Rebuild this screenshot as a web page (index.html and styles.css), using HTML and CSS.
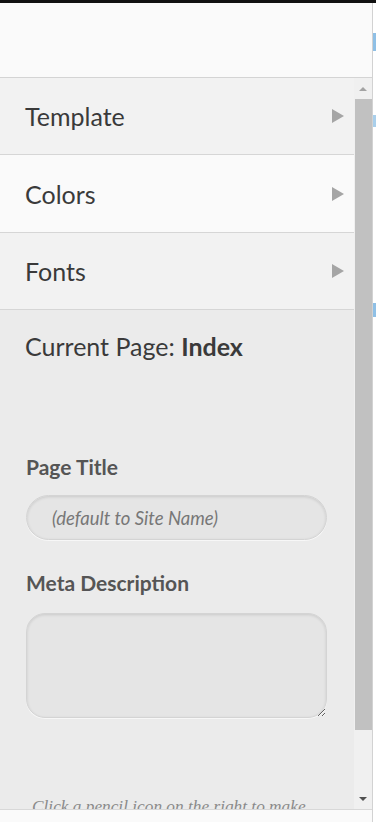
FILE: index.html
```html
<!DOCTYPE html>
<html lang="en">
<head>
    <meta charset="UTF-8">
    <meta name="viewport" content="width=device-width, initial-scale=1.0">
    <title>Site Editor</title>
    <link rel="stylesheet" href="styles.css">
</head>
<body>
    <div class="topline"></div>
    <div class="frame">
        <div class="panel">
            <div class="panel-header"></div>

            <div class="scroller">
                <div class="scroll-content">
                    <div class="menu-item alt">
                        <span>Template</span>
                        <i class="arrow"></i>
                    </div>
                    <div class="menu-item">
                        <span>Colors</span>
                        <i class="arrow"></i>
                    </div>
                    <div class="menu-item alt">
                        <span>Fonts</span>
                        <i class="arrow"></i>
                    </div>

                    <div class="page-settings">
                        <h2 class="current-page">Current Page: <b>Index</b></h2>

                        <label class="field-label" for="pageTitle">Page Title</label>
                        <input id="pageTitle" class="field-input" type="text" placeholder="(default to Site Name)">

                        <label class="field-label" for="metaDesc">Meta Description</label>
                        <textarea id="metaDesc" class="field-textarea"></textarea>

                        <p class="hint">Click a pencil icon on the right to make changes to the page.</p>
                    </div>
                </div>

                <div class="scrollbar">
                    <div class="sb-button"><i class="sb-up"></i></div>
                    <div class="sb-thumb"></div>
                    <div class="sb-track"></div>
                    <div class="sb-button"><i class="sb-down"></i></div>
                </div>
            </div>

            <div class="panel-footer"></div>
        </div>
        <div class="outside"></div>
    </div>
</body>
</html>
```

FILE: styles.css
```css
* {
    box-sizing: border-box;
}
body {
    margin: 0;
    height: 822px;
    overflow: hidden;
    background: #fff;
    font-family: 'Lato', 'Open Sans', sans-serif;
    color: #3a3a3a;
}
.topline {
    height: 3px;
    background: #111;
}
.frame {
    display: flex;
    height: 819px;
}
.panel {
    width: 373px;
    display: flex;
    flex-direction: column;
    border-right: 1px solid #d2d2d2;
}
.panel-header {
    height: 75px;
    flex-shrink: 0;
    background: #fafafa;
    border-bottom: 1px solid #d4d4d4;
}
.scroller {
    display: flex;
    height: 731px;
    flex-shrink: 0;
}
.scroll-content {
    flex: 1;
    overflow: hidden;
    background: #ebebeb;
}
.menu-item {
    height: 77.4px;
    display: flex;
    align-items: center;
    justify-content: space-between;
    padding: 0 10px 0 25px;
    background: #fafafa;
    border-bottom: 1px solid #d6d6d6;
    font-size: 25px;
}
.menu-item.alt {
    background: #f2f2f2;
}
.arrow {
    width: 0;
    height: 0;
    border-top: 7px solid transparent;
    border-bottom: 7px solid transparent;
    border-left: 12px solid #a5a5a5;
}
.page-settings {
    padding: 0 27px 0 26px;
}
.current-page {
    margin: 21px 0 0 -1px;
    font-size: 25px;
    font-weight: normal;
    line-height: 30px;
}
.current-page b {
    font-weight: bold;
}
.field-label {
    display: block;
    margin-top: 93px;
    font-size: 21px;
    font-weight: bold;
    color: #555;
    line-height: 26px;
}
.field-label + .field-input {
    margin-top: 15px;
}
.field-input,
.field-textarea {
    display: block;
    width: 301px;
    background: #e5e5e5;
    border: 1px solid #d4d4d4;
    box-shadow: inset 0 1px 3px rgba(0, 0, 0, 0.12), 0 1px 0 #f7f7f7;
    outline: none;
    font-family: 'Lato', sans-serif;
}
.field-input {
    height: 45px;
    border-radius: 23px;
    padding: 0 25px;
    font-size: 18.5px;
    font-style: italic;
    color: #666;
}
.field-input::placeholder {
    color: #777;
}
.field-input + .field-label {
    margin-top: 30px;
}
.field-textarea {
    margin-top: 17px;
    height: 105px;
    border-radius: 19px;
    resize: vertical;
}
.hint {
    margin: 79px 0 0 6px;
    font-family: 'Liberation Serif', serif;
    font-style: italic;
    font-size: 17.3px;
    color: #8a8a8a;
}
.scrollbar {
    width: 18px;
    display: flex;
    flex-direction: column;
    background: #f0f0f0;
}
.sb-button {
    height: 21px;
    display: flex;
    align-items: center;
    justify-content: center;
}
.sb-up {
    border-left: 4px solid transparent;
    border-right: 4px solid transparent;
    border-bottom: 4px solid #a3a3a3;
}
.sb-down {
    border-left: 4px solid transparent;
    border-right: 4px solid transparent;
    border-top: 4px solid #505050;
}
.sb-thumb {
    height: 631px;
    margin-left: 1px;
    background: #c1c1c1;
}
.sb-track {
    flex: 1;
}
.panel-footer {
    flex: 1;
    background: #fafafa;
    border-top: 1px solid #d8d8d8;
}
.outside {
    flex: 1;
    background:
        linear-gradient(#fff 30px, #8fc0e6 30px, #8fc0e6 48px, #fff 48px,
                        #fff 112px, #a9cfeb 112px, #a9cfeb 124px, #fff 124px,
                        #fff 300px, #8fc0e6 300px, #8fc0e6 314px, #fff 314px);
}
```
